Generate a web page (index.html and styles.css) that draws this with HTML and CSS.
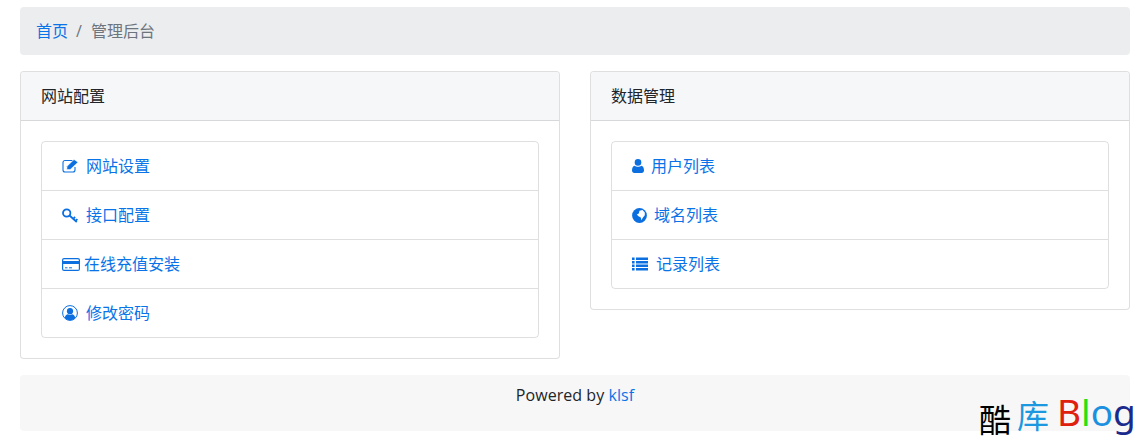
FILE: index.html
```html
<!DOCTYPE html>
<html lang="zh-CN">
<head>
    <meta charset="UTF-8">
    <meta name="viewport" content="width=device-width, initial-scale=1.0">
    <title>管理后台</title>
    <link rel="stylesheet" href="styles.css">
</head>
<body>

    <!-- Breadcrumb -->
    <ol class="breadcrumb">
        <li><a href="#">首页</a></li>
        <li class="divider">/</li>
        <li class="active">管理后台</li>
    </ol>

    <div class="row">
        <!-- Site config -->
        <div class="card">
            <div class="card-header">网站配置</div>
            <div class="card-body">
                <div class="list-group">
                    <a href="#" class="list-item">
                        <svg class="icon icon-edit" width="16" height="14" viewBox="0 0 16 14"><path d="M13 8V11a2 2 0 0 1-2 2H3a2 2 0 0 1-2-2V3.500a2 2 0 0 1 2-2h7.500" fill="none" stroke="currentColor" stroke-width="1.100"/><path d="M4.800 10.500 5.100 7.300 12 .5 16 3.200 8.200 10.500z" fill="currentColor" stroke="#fff" stroke-width=".5"/></svg>网站设置
                    </a>
                    <a href="#" class="list-item">
                        <svg class="icon icon-key" width="16" height="15" viewBox="0 0 16 15"><circle cx="4.700" cy="5" r="3.700" fill="none" stroke="currentColor" stroke-width="1.800"/><path d="M7.500 7.500 14.800 14M11.300 11l1.700-2.100M13.700 13l1.600-2" fill="none" stroke="currentColor" stroke-width="1.800"/></svg>接口配置
                    </a>
                    <a href="#" class="list-item">
                        <svg class="icon icon-card" width="18" height="13" viewBox="0 0 18 13"><rect x=".6" y=".6" width="16.800" height="11.800" rx="1.500" fill="none" stroke="currentColor" stroke-width="1.200"/><rect x="1" y="3" width="16" height="3" fill="currentColor"/><path d="M3 9.800h2.500M7 9.800h3" stroke="currentColor" stroke-width="1"/></svg>在线充值安装
                    </a>
                    <a href="#" class="list-item">
                        <svg class="icon icon-user-circle" width="16" height="16" viewBox="0 0 16 16"><circle cx="8" cy="8" r="7.400" fill="none" stroke="currentColor" stroke-width="1"/><circle cx="8" cy="6.200" r="3.100" fill="currentColor"/><path d="M2.800 13c.3-2.600 1.800-3.800 3.200-3.800.6.400 1.200.6 2 .6s1.400-.2 2-.6c1.400 0 2.900 1.200 3.200 3.800a7 7 0 0 1-10.400 0z" fill="currentColor"/></svg>修改密码
                    </a>
                </div>
            </div>
        </div>

        <!-- Data management -->
        <div class="card card-short">
            <div class="card-header">数据管理</div>
            <div class="card-body">
                <div class="list-group">
                    <a href="#" class="list-item">
                        <svg class="icon icon-user" width="12" height="14" viewBox="0 0 12 14"><circle cx="6" cy="3.400" r="3.300" fill="currentColor"/><path d="M0 11.500C0 8.800.9 7 2.700 6.700 3.500 7.400 4.700 7.800 6 7.800s2.500-.4 3.300-1.100C11.100 7 12 8.800 12 11.500c0 1.500-1 2.500-2.300 2.500H2.300C1 14 0 13 0 11.500z" fill="currentColor"/></svg>用户列表
                    </a>
                    <a href="#" class="list-item">
                        <svg class="icon icon-globe" width="15" height="15" viewBox="0 0 15 15"><circle cx="7.500" cy="7.500" r="7.400" fill="currentColor"/><path d="M7.500 2.800 10.500 2 12.800 4.500 12.800 7.300 10.800 9.700 9.300 12.300 8.800 9.500 6.500 8.300 4.800 6.500 6.800 5.600z" fill="#fff"/></svg>域名列表
                    </a>
                    <a href="#" class="list-item">
                        <svg class="icon icon-list" width="16" height="14" viewBox="0 0 16 14"><path d="M0 .5h2.600v2.600H0zM4 .5h12v2.600H4zM0 4h2.600v2.600H0zM4 4h12v2.600H4zM0 7.500h2.600v2.600H0zM4 7.500h12v2.600H4zM0 11h2.600v2.600H0zM4 11h12v2.600H4z" fill="currentColor"/></svg>记录列表
                    </a>
                </div>
            </div>
        </div>
    </div>

    <!-- Footer -->
    <footer class="footer">
        <p>Powered by <a href="#">klsf</a></p>
    </footer>

    <!-- Watermark over the corner -->
    <div class="watermark">
        <span class="wm-ku">酷</span><span class="wm-lib">库</span><span class="wm-b">B</span><span class="wm-l">l</span><span class="wm-o">o</span><span class="wm-g">g</span>
    </div>

</body>
</html>
```

FILE: styles.css
```css
* {
    box-sizing: border-box;
}

html, body {
    height: 100%;
}

body {
    margin: 0;
    padding: 7px 15px 0 20px;
    font-family: "Open Sans", "Noto Sans CJK SC", sans-serif;
    font-size: 16px;
    line-height: 24px;
    color: #212529;
    background: #fff;
    position: relative;
    overflow: hidden;
}

a {
    color: #0a73e8;
    text-decoration: none;
}

.breadcrumb {
    display: flex;
    list-style: none;
    margin: 0 0 16px;
    padding: 12px 16px;
    background: #ecedef;
    border-radius: 4px;
}

.breadcrumb .divider {
    padding: 0 9px 0 8px;
    color: #6c757d;
}

.breadcrumb .active {
    color: #6c757d;
}

.row {
    display: grid;
    grid-template-columns: 1fr 1fr;
    gap: 30px;
    align-items: start;
    margin-bottom: 16px;
}

.card {
    border: 1px solid rgba(0, 0, 0, 0.125);
    border-radius: 4px;
    background: #fff;
}

.card-header {
    height: 49px;
    padding: 12px 20px;
    background: #f6f7f9;
    border-bottom: 1px solid rgba(0, 0, 0, 0.125);
    border-radius: 3px 3px 0 0;
}

.card-body {
    padding: 20px;
}

.list-group {
    display: flex;
    flex-direction: column;
    border: 1px solid rgba(0, 0, 0, 0.125);
    border-radius: 4px;
}

.list-item {
    display: flex;
    align-items: center;
    height: 49px;
    padding: 0 20px;
    border-bottom: 1px solid rgba(0, 0, 0, 0.125);
}

.list-item:last-child {
    height: 48px;
    border-bottom: none;
}

.icon {
    flex: none;
    margin-right: 8px;
    color: #0b6fe0;
}

.icon-card {
    margin-right: 4px;
}

.icon-user,
.icon-globe {
    margin-right: 7px;
}

.footer {
    background: #f7f7f7;
    text-align: center;
    padding: 8px 0 24px;
    border-radius: 4px;
    letter-spacing: 0.05px;
}

.footer p {
    margin: 0;
}

.watermark {
    position: absolute;
    left: 979px;
    top: 390px;
    display: flex;
    align-items: flex-start;
    font-family: "Noto Sans", "Noto Sans CJK SC", sans-serif;
    font-size: 37px;
    line-height: 44px;
    white-space: nowrap;
}

.wm-ku {
    color: #000;
    font-size: 32px;
    margin: 8px 6px 0 0;
}

.wm-lib {
    color: #1b98e0;
    font-size: 32px;
    margin: 4px 8px 0 0;
}

.wm-b {
    color: #e0200f;
}

.wm-l {
    color: #22e01a;
}

.wm-o {
    color: #1b8fe0;
}

.wm-g {
    color: #1a2a8c;
}
```
